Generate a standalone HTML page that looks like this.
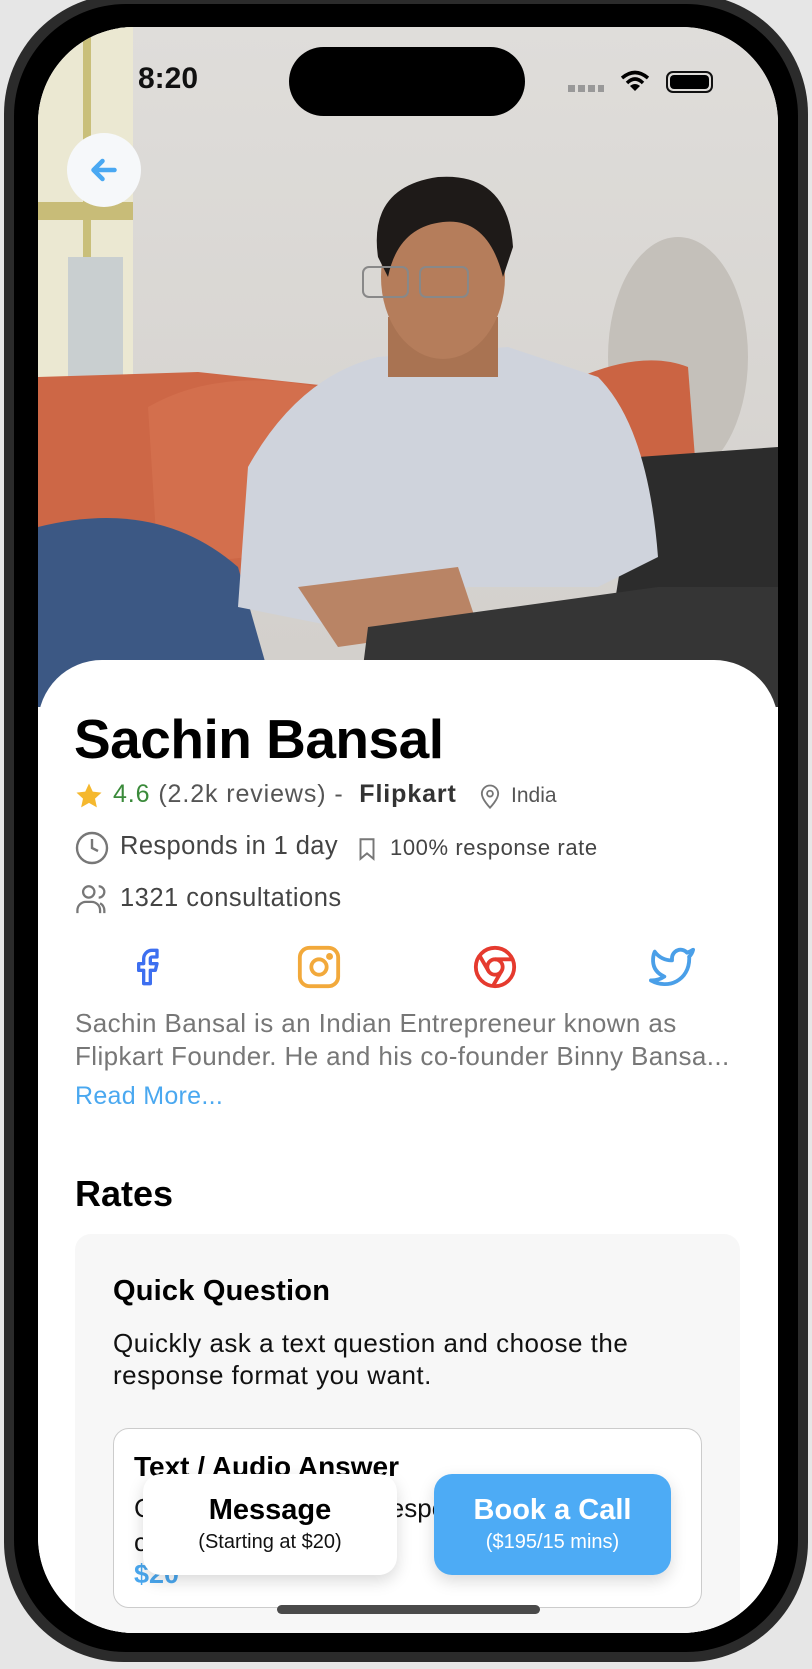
<!DOCTYPE html>
<html><head><meta charset="utf-8"><style>
*{margin:0;padding:0;box-sizing:border-box}
body{width:812px;height:1669px;background:#e6e6e6;position:relative;overflow:hidden;font-family:"Liberation Sans",Arial,sans-serif}
.frame{position:absolute;left:4px;top:-6px;width:804px;height:1668px;border-radius:120px;background:#2b2b2b}
.frame2{position:absolute;left:14px;top:4px;width:784px;height:1648px;border-radius:112px;background:#000}
.screen{position:absolute;left:38px;top:27px;width:740px;height:1606px;border-radius:96px;overflow:hidden;background:#fff}
.abs{position:absolute}
.t{position:absolute;white-space:nowrap}
</style></head><body>
<div class="frame"></div><div class="frame2"></div>
<div class="screen">
  <svg class="abs" style="left:0;top:0" width="740" height="680" viewBox="0 0 740 680">
    <defs><linearGradient id="wall" x1="0" y1="0" x2="0" y2="1"><stop offset="0" stop-color="#dfddda"/><stop offset="1" stop-color="#d2cfcb"/></linearGradient></defs>
    <rect width="740" height="680" fill="url(#wall)"/>
    <rect x="0" y="0" width="95" height="360" fill="#ebe8d2"/>
    <rect x="45" y="0" width="8" height="360" fill="#c9bf7a"/>
    <rect x="0" y="175" width="95" height="18" fill="#c8bc78"/>
    <rect x="30" y="230" width="55" height="120" fill="#c9cfd0"/>
    <ellipse cx="640" cy="330" rx="70" ry="120" fill="#c4c0ba"/>
    <path d="M0 350 L160 345 L300 360 L300 560 L0 560Z" fill="#cd6746"/>
    <path d="M110 380 Q180 340 280 360 L300 520 L120 540Z" fill="#d36f4d"/>
    <path d="M520 360 Q600 320 650 340 L660 470 L540 470Z" fill="#cb6443"/>
    <path d="M600 430 L740 420 L740 680 L560 680Z" fill="#2c2c2c"/>
    <path d="M0 500 Q120 470 200 540 L240 680 L0 680Z" fill="#3c5884"/>
    <path d="M210 440 Q260 350 340 330 L470 320 L560 350 Q610 400 620 530 L560 560 L430 560 L300 600 L200 580Z" fill="#cfd3dc"/>
    <path d="M260 560 L420 540 L440 600 L300 620Z" fill="#b98465"/>
    <path d="M330 600 L620 560 L740 560 L740 680 L320 680Z" fill="#353535"/>
    <rect x="350" y="290" width="110" height="60" fill="#a97352"/>
    <ellipse cx="405" cy="250" rx="62" ry="82" fill="#b57d5b"/>
    <path d="M340 230 Q330 160 400 150 Q470 145 475 220 L465 250 Q450 190 405 195 Q360 200 350 250Z" fill="#1e1a18"/>
    <rect x="325" y="240" width="45" height="30" rx="6" fill="none" stroke="#888" stroke-width="2"/>
    <rect x="382" y="240" width="48" height="30" rx="6" fill="none" stroke="#888" stroke-width="2"/>
  </svg>
  <div class="abs" style="left:29px;top:106px;width:74px;height:74px;border-radius:50%;background:#f6f8fa"></div>
  <svg class="abs" style="left:48px;top:125px" width="36" height="36" viewBox="0 0 24 24" fill="none" stroke="#4aa8f2" stroke-width="3" stroke-linecap="round" stroke-linejoin="round"><path d="M19 12H5M11 6l-6 6 6 6"/></svg>
  <div class="t" style="left:100px;top:35px;font-size:30px;font-weight:600;color:#111">8:20</div>
  <div class="abs" style="left:251px;top:20px;width:236px;height:69px;border-radius:35px;background:#000"></div>
  <div class="abs" style="left:530px;top:58px;width:36px;height:7px;background:repeating-linear-gradient(90deg,#999 0 7px,transparent 7px 10px)"></div>
  <svg class="abs" style="left:582px;top:42px" width="30" height="24" viewBox="0 0 30 24"><path d="M2 9 Q15 -2 28 9" stroke="#000" stroke-width="3.5" fill="none"/><path d="M7 14 Q15 6 23 14" stroke="#000" stroke-width="3.5" fill="none"/><path d="M15 22 L10 17 Q15 13 20 17Z" fill="#000"/></svg>
  <div class="abs" style="left:628px;top:44px;width:47px;height:22px;border:2.5px solid #111;border-radius:7px;padding:2px"><div style="width:100%;height:100%;background:#000;border-radius:4px"></div></div>

  <div class="abs" style="left:0;top:633px;width:740px;height:1000px;background:#fff;border-radius:64px 64px 0 0"></div>
  <div class="t" style="left:36px;top:680px;font-size:55px;font-weight:700;color:#000;letter-spacing:-0.5px">Sachin Bansal</div>
  <svg class="abs" style="left:36px;top:754px" width="30" height="30" viewBox="0 0 24 24"><path d="M12 2l3 6.5 7 .8-5.2 4.8 1.5 7L12 17.5 5.7 21.1l1.5-7L2 9.3l7-.8z" fill="#f5b82e"/></svg>
  <div class="t" style="left:75px;top:753px;font-size:25px;color:#555;letter-spacing:0.9px"><span style="color:#3a8a3a">4.6</span> (2.2k reviews) -&nbsp; <b style="color:#333">Flipkart</b></div>
  <svg class="abs" style="left:438px;top:754px" width="28" height="30" viewBox="0 0 24 24" fill="none" stroke="#777" stroke-width="1.6"><path d="M12 22s7-7 7-12a7 7 0 0 0-14 0c0 5 7 12 7 12z"/><circle cx="12" cy="10" r="2.5"/></svg>
  <div class="t" style="left:473px;top:757px;font-size:21px;color:#555">India</div>
  <svg class="abs" style="left:36px;top:803px" width="36" height="36" viewBox="0 0 24 24" fill="none" stroke="#777" stroke-width="1.6"><circle cx="12" cy="12" r="10"/><path d="M12 6v6l4 2"/></svg>
  <div class="t" style="left:82px;top:805px;font-size:25.5px;color:#444;letter-spacing:0.4px">Responds in 1 day</div>
  <svg class="abs" style="left:316px;top:807px" width="26" height="30" viewBox="0 0 24 24" fill="none" stroke="#777" stroke-width="1.8"><path d="M6 3h12v18l-6-5-6 5z"/></svg>
  <div class="t" style="left:352px;top:808px;font-size:22px;color:#444;letter-spacing:0.6px">100% response rate</div>
  <svg class="abs" style="left:36px;top:855px" width="38" height="34" viewBox="0 0 26 24" fill="none" stroke="#777" stroke-width="1.6"><circle cx="10" cy="7" r="4"/><path d="M2 22v-2a6 6 0 0 1 6-6h4a6 6 0 0 1 6 6v2"/><path d="M17 3a4 4 0 0 1 0 8M21 22v-2a6 6 0 0 0-3-5"/></svg>
  <div class="t" style="left:82px;top:857px;font-size:25.5px;color:#444;letter-spacing:0.5px">1321 consultations</div>

  <svg class="abs" style="left:89px;top:918px" width="40" height="44" viewBox="0 0 24 24" fill="none" stroke="#3d6ff0" stroke-width="2" stroke-linejoin="round"><path d="M18 2h-3a5 5 0 0 0-5 5v3H7v4h3v8h4v-8h3l1-4h-4V7a1 1 0 0 1 1-1h3z"/></svg>
  <svg class="abs" style="left:258px;top:917px" width="46" height="46" viewBox="0 0 24 24" fill="none" stroke="#f2a93b" stroke-width="2"><rect x="2" y="2" width="20" height="20" rx="5"/><circle cx="12" cy="12" r="4"/><circle cx="17.5" cy="6.5" r="0.8" fill="#f2a93b"/></svg>
  <svg class="abs" style="left:434px;top:917px" width="46" height="46" viewBox="0 0 24 24" fill="none" stroke="#e53a2e" stroke-width="2"><circle cx="12" cy="12" r="10"/><circle cx="12" cy="12" r="4"/><path d="M21.2 8H12M3.95 6.06L8.54 14M10.88 21.94L15.46 14"/></svg>
  <svg class="abs" style="left:610px;top:917px" width="48" height="46" viewBox="0 0 24 24" fill="none" stroke="#4a9fe8" stroke-width="2" stroke-linejoin="round"><path d="M23 3a10.9 10.9 0 0 1-3.14 1.53 4.48 4.48 0 0 0-7.86 3v1A10.66 10.66 0 0 1 3 4s-4 9 5 13a11.64 11.64 0 0 1-7 2c9 5 20 0 20-11.5a4.5 4.5 0 0 0-.08-.83A7.72 7.72 0 0 0 23 3z"/></svg>

  <div class="abs" style="left:37px;top:980px;font-size:26px;line-height:33px;color:#777;letter-spacing:0.4px;white-space:nowrap">Sachin Bansal is an Indian Entrepreneur known as<br>Flipkart Founder. He and his co-founder Binny Bansa...</div>
  <div class="t" style="left:37px;top:1055px;font-size:25px;color:#4aa8f0;letter-spacing:0.3px">Read More...</div>
  <div class="t" style="left:37px;top:1146px;font-size:36px;font-weight:700;color:#000">Rates</div>
  <div class="abs" style="left:37px;top:1207px;width:665px;height:500px;background:#f7f7f7;border-radius:16px"></div>
  <div class="t" style="left:75px;top:1248px;font-size:29px;font-weight:700;color:#000;letter-spacing:0.2px">Quick Question</div>
  <div class="abs" style="left:75px;top:1300px;font-size:26px;line-height:32px;color:#111;letter-spacing:0.5px;white-space:nowrap">Quickly ask a text question and choose the<br>response format you want.</div>
  <div class="abs" style="left:75px;top:1401px;width:589px;height:180px;background:#fff;border:1.5px solid #ccc;border-radius:16px"></div>
  <div class="t" style="left:96px;top:1424px;font-size:28px;font-weight:700;color:#000">Text / Audio Answer</div>
  <div class="t" style="left:96px;top:1466px;font-size:26px;color:#111">Choose text or audio respo</div>
  <div class="t" style="left:96px;top:1500px;font-size:26px;color:#111">c</div>
  <div class="t" style="left:96px;top:1532px;font-size:27px;font-weight:700;color:#4aa8f0">$20</div>
  <div class="abs" style="left:105px;top:1447px;width:254px;height:101px;background:#fff;border-radius:18px;box-shadow:0 6px 16px rgba(0,0,0,.15);text-align:center">
    <div style="font-size:29px;font-weight:700;color:#000;margin-top:20px">Message</div>
    <div style="font-size:20px;color:#111;margin-top:4px">(Starting at $20)</div>
  </div>
  <div class="abs" style="left:396px;top:1447px;width:237px;height:101px;background:#4dabf5;border-radius:18px;box-shadow:0 6px 16px rgba(0,0,0,.15);text-align:center;color:#fff">
    <div style="font-size:29px;font-weight:700;margin-top:20px">Book a Call</div>
    <div style="font-size:20px;margin-top:4px">($195/15 mins)</div>
  </div>
  <div class="abs" style="left:239px;top:1578px;width:263px;height:9px;border-radius:5px;background:#4a4a4a"></div>
</div>
</body></html>
